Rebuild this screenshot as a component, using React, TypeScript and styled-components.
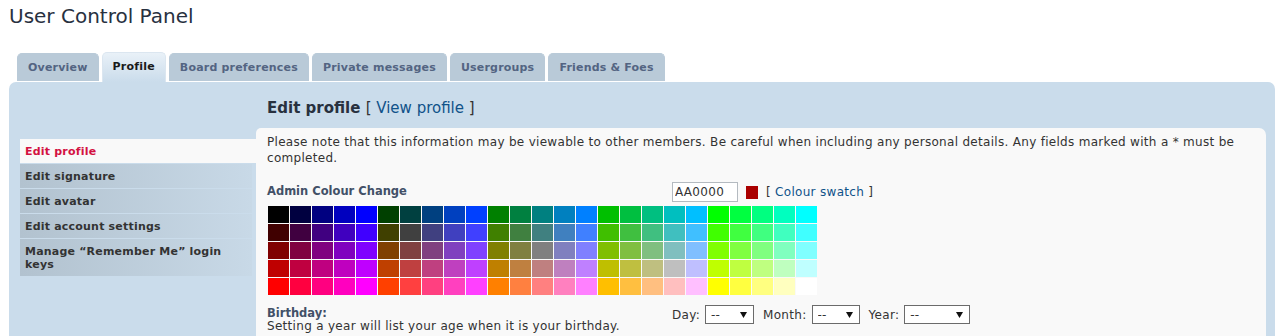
import styled, { createGlobalStyle } from 'styled-components';

const GlobalStyle = createGlobalStyle`
	html, body {
		margin: 0;
		padding: 0;
		background: #ffffff;
	}
	body {
		font-family: "DejaVu Sans", Verdana, sans-serif;
		color: #333333;
	}
`;

const Page = styled.div`
	width: 1280px;
	height: 336px;
	overflow: hidden;
	padding: 0 5px 0 9px;
	box-sizing: border-box;
	display: flex;
	flex-direction: column;
`;

const Title = styled.h1`
	margin: 0;
	padding-top: 4px;
	height: 52px;
	box-sizing: border-box;
	font-size: 20px;
	font-weight: normal;
	line-height: 24px;
	color: #28313f;
	flex: none;
`;

const TabRow = styled.ul`
	display: flex;
	align-items: flex-end;
	gap: 3px;
	list-style: none;
	margin: 0;
	padding: 0 0 0 8px;
	height: 30px;
	flex: none;
`;

const Tab = styled.li<{ $active?: boolean }>`
	height: ${p => (p.$active ? '30px' : '28px')};
	margin-bottom: ${p => (p.$active ? '0' : '1px')};
	padding: 0 10px ${p => (p.$active ? '2px' : '0')} 10px;
	display: flex;
	align-items: center;
	box-sizing: border-box;
	border-radius: 5px 5px 0 0;
	font-size: 11px;
	font-weight: bold;
	letter-spacing: 0.2px;
	color: ${p => (p.$active ? '#1a1a1a' : '#536482')};
	background: ${p =>
		p.$active ? 'linear-gradient(to bottom, #e9f1f8, #cadceb)' : '#b9cad8'};
	border: 1px solid ${p => (p.$active ? '#dbe6f0' : '#b9cad8')};
	border-bottom: none;
`;

const Panel = styled.div`
	flex: 1;
	background: #cadceb;
	border-radius: 7px 7px 0 0;
	padding: 16px 9px 0 11px;
	display: grid;
	grid-template-columns: 236px 1fr;
	box-sizing: border-box;
`;

const Menu = styled.ul`
	list-style: none;
	margin: 41px 0 0 0;
	padding: 0;
	display: flex;
	flex-direction: column;
	gap: 1px;
`;

const MenuItem = styled.li<{ $active?: boolean }>`
	margin-right: ${p => (p.$active ? '0' : '4px')};
	padding: 6px 5px 5px 5px;
	font-size: 11px;
	font-weight: bold;
	letter-spacing: 0.2px;
	line-height: 13px;
	color: ${p => (p.$active ? '#d31141' : '#333333')};
	background: ${p =>
		p.$active ? '#f9f9f9' : 'linear-gradient(to right, #b2c2cf, #c8d9e7)'};
`;

const Main = styled.div`
	display: flex;
	flex-direction: column;
`;

const Heading = styled.h2`
	margin: 0 0 10px 11px;
	font-size: 15px;
	line-height: 20px;
	font-weight: bold;
	color: #28313f;
`;

const HeadingExtra = styled.span`
	font-weight: normal;
	color: #333333;
`;

const Link = styled.a`
	color: #105289;
	text-decoration: none;
`;

const Content = styled.div`
	background: #f9f9f9;
	border-radius: 5px 7px 0 0;
	padding: 6px 11px 0 11px;
	flex: 1;
	font-size: 12px;
	letter-spacing: 0.3px;
	color: #333333;
`;

const Note = styled.p`
	margin: 0;
	line-height: 16px;
`;

const FieldRow = styled.div<{ $top: number }>`
	display: grid;
	grid-template-columns: 405px 1fr;
	align-items: start;
	margin-top: ${p => p.$top}px;
`;

const Label = styled.div<{ $pad?: number }>`
	font-size: 11.5px;
	line-height: 13px;
	letter-spacing: 0;
	font-weight: bold;
	color: #425067;
	padding-top: ${p => p.$pad ?? 0}px;
`;

const Explain = styled.div`
	line-height: 13px;
`;

const ColourControls = styled.div`
	display: flex;
	align-items: center;
	gap: 8px;
	height: 20px;
`;

const ColourInput = styled.input`
	width: 66px;
	height: 20px;
	box-sizing: border-box;
	border: 1px solid #b4bac0;
	background: #ffffff;
	padding: 0 2px;
	margin: 0;
	font-family: "DejaVu Sans", Verdana, sans-serif;
	font-size: 12px;
	letter-spacing: 0.3px;
	color: #333333;
`;

const Swatch = styled.span<{ $colour: string }>`
	width: 12px;
	height: 13px;
	background: ${p => p.$colour};
`;

const Grid = styled.div`
	display: grid;
	grid-template-columns: repeat(25, 21px);
	grid-auto-rows: 17px;
	gap: 1px;
	margin: 4px 0 0 1px;
	width: max-content;
`;

const Cell = styled.div<{ $colour: string }>`
	background: ${p => p.$colour};
`;

const DateControls = styled.div`
	display: flex;
	align-items: center;
	height: 19px;
`;

const SelectGroup = styled.label`
	display: flex;
	align-items: center;
	gap: 5px;
	margin-right: 9px;
`;

const SelectWrap = styled.span<{ $width: number }>`
	position: relative;
	width: ${p => p.$width}px;
	height: 19px;
	display: inline-block;
`;

const Select = styled.select`
	appearance: none;
	width: 100%;
	height: 100%;
	box-sizing: border-box;
	border: 1px solid #6b6b6b;
	border-radius: 0;
	background: #ffffff;
	padding: 0 0 0 5px;
	margin: 0;
	font-family: "DejaVu Sans", Verdana, sans-serif;
	font-size: 12px;
	color: #333333;
`;

const Arrow = styled.svg`
	position: absolute;
	right: 7px;
	top: 7px;
	pointer-events: none;
`;

const levels = ['00', '40', '80', 'BF', 'FF'];
const swatch: string[] = [];
levels.forEach(r => {
	levels.forEach(g => {
		levels.forEach(b => swatch.push(`#${r}${g}${b}`));
	});
});

const tabs = [
	'Overview',
	'Profile',
	'Board preferences',
	'Private messages',
	'Usergroups',
	'Friends & Foes',
];

const menu = [
	'Edit profile',
	'Edit signature',
	'Edit avatar',
	'Edit account settings',
	'Manage \u201cRemember Me\u201d login keys',
];

const DateSelect = ({ label, width }: { label: string; width: number }) => (
	<SelectGroup>
		{label}:
		<SelectWrap $width={width}>
			<Select defaultValue="--">
				<option>--</option>
			</Select>
			<Arrow width="7" height="6" viewBox="0 0 7 6">
				<path d="M0 0 H7 L3.5 6 Z" fill="#111" />
			</Arrow>
		</SelectWrap>
	</SelectGroup>
);

export default function App() {
	return (
		<>
			<GlobalStyle />
			<Page>
				<Title>User Control Panel</Title>
				<TabRow>
					{tabs.map(t => (
						<Tab key={t} $active={t === 'Profile'}>
							{t}
						</Tab>
					))}
				</TabRow>
				<Panel>
					<Menu>
						{menu.map((m, i) => (
							<MenuItem key={m} $active={i === 0}>
								{m}
							</MenuItem>
						))}
					</Menu>
					<Main>
						<Heading>
							Edit profile{' '}
							<HeadingExtra>
								[ <Link href="#">View profile</Link> ]
							</HeadingExtra>
						</Heading>
						<Content>
							<Note>
								Please note that this information may be viewable to other members. Be
								careful when including any personal details. Any fields marked with a *
								must be completed.
							</Note>
							<FieldRow $top={16}>
								<Label $pad={3}>Admin Colour Change</Label>
								<ColourControls>
									<ColourInput defaultValue="AA0000" />
									<Swatch $colour="#AA0000" />
									<span>
										[ <Link href="#">Colour swatch</Link> ]
									</span>
								</ColourControls>
							</FieldRow>
							<Grid>
								{swatch.map((c, i) => (
									<Cell key={i} $colour={c} />
								))}
							</Grid>
							<FieldRow $top={10}>
								<div>
									<Label $pad={2}>Birthday:</Label>
									<Explain>
										Setting a year will list your age when it is your birthday.
									</Explain>
								</div>
								<DateControls>
									<DateSelect label="Day" width={49} />
									<DateSelect label="Month" width={48} />
									<DateSelect label="Year" width={66} />
								</DateControls>
							</FieldRow>
						</Content>
					</Main>
				</Panel>
			</Page>
		</>
	);
}
